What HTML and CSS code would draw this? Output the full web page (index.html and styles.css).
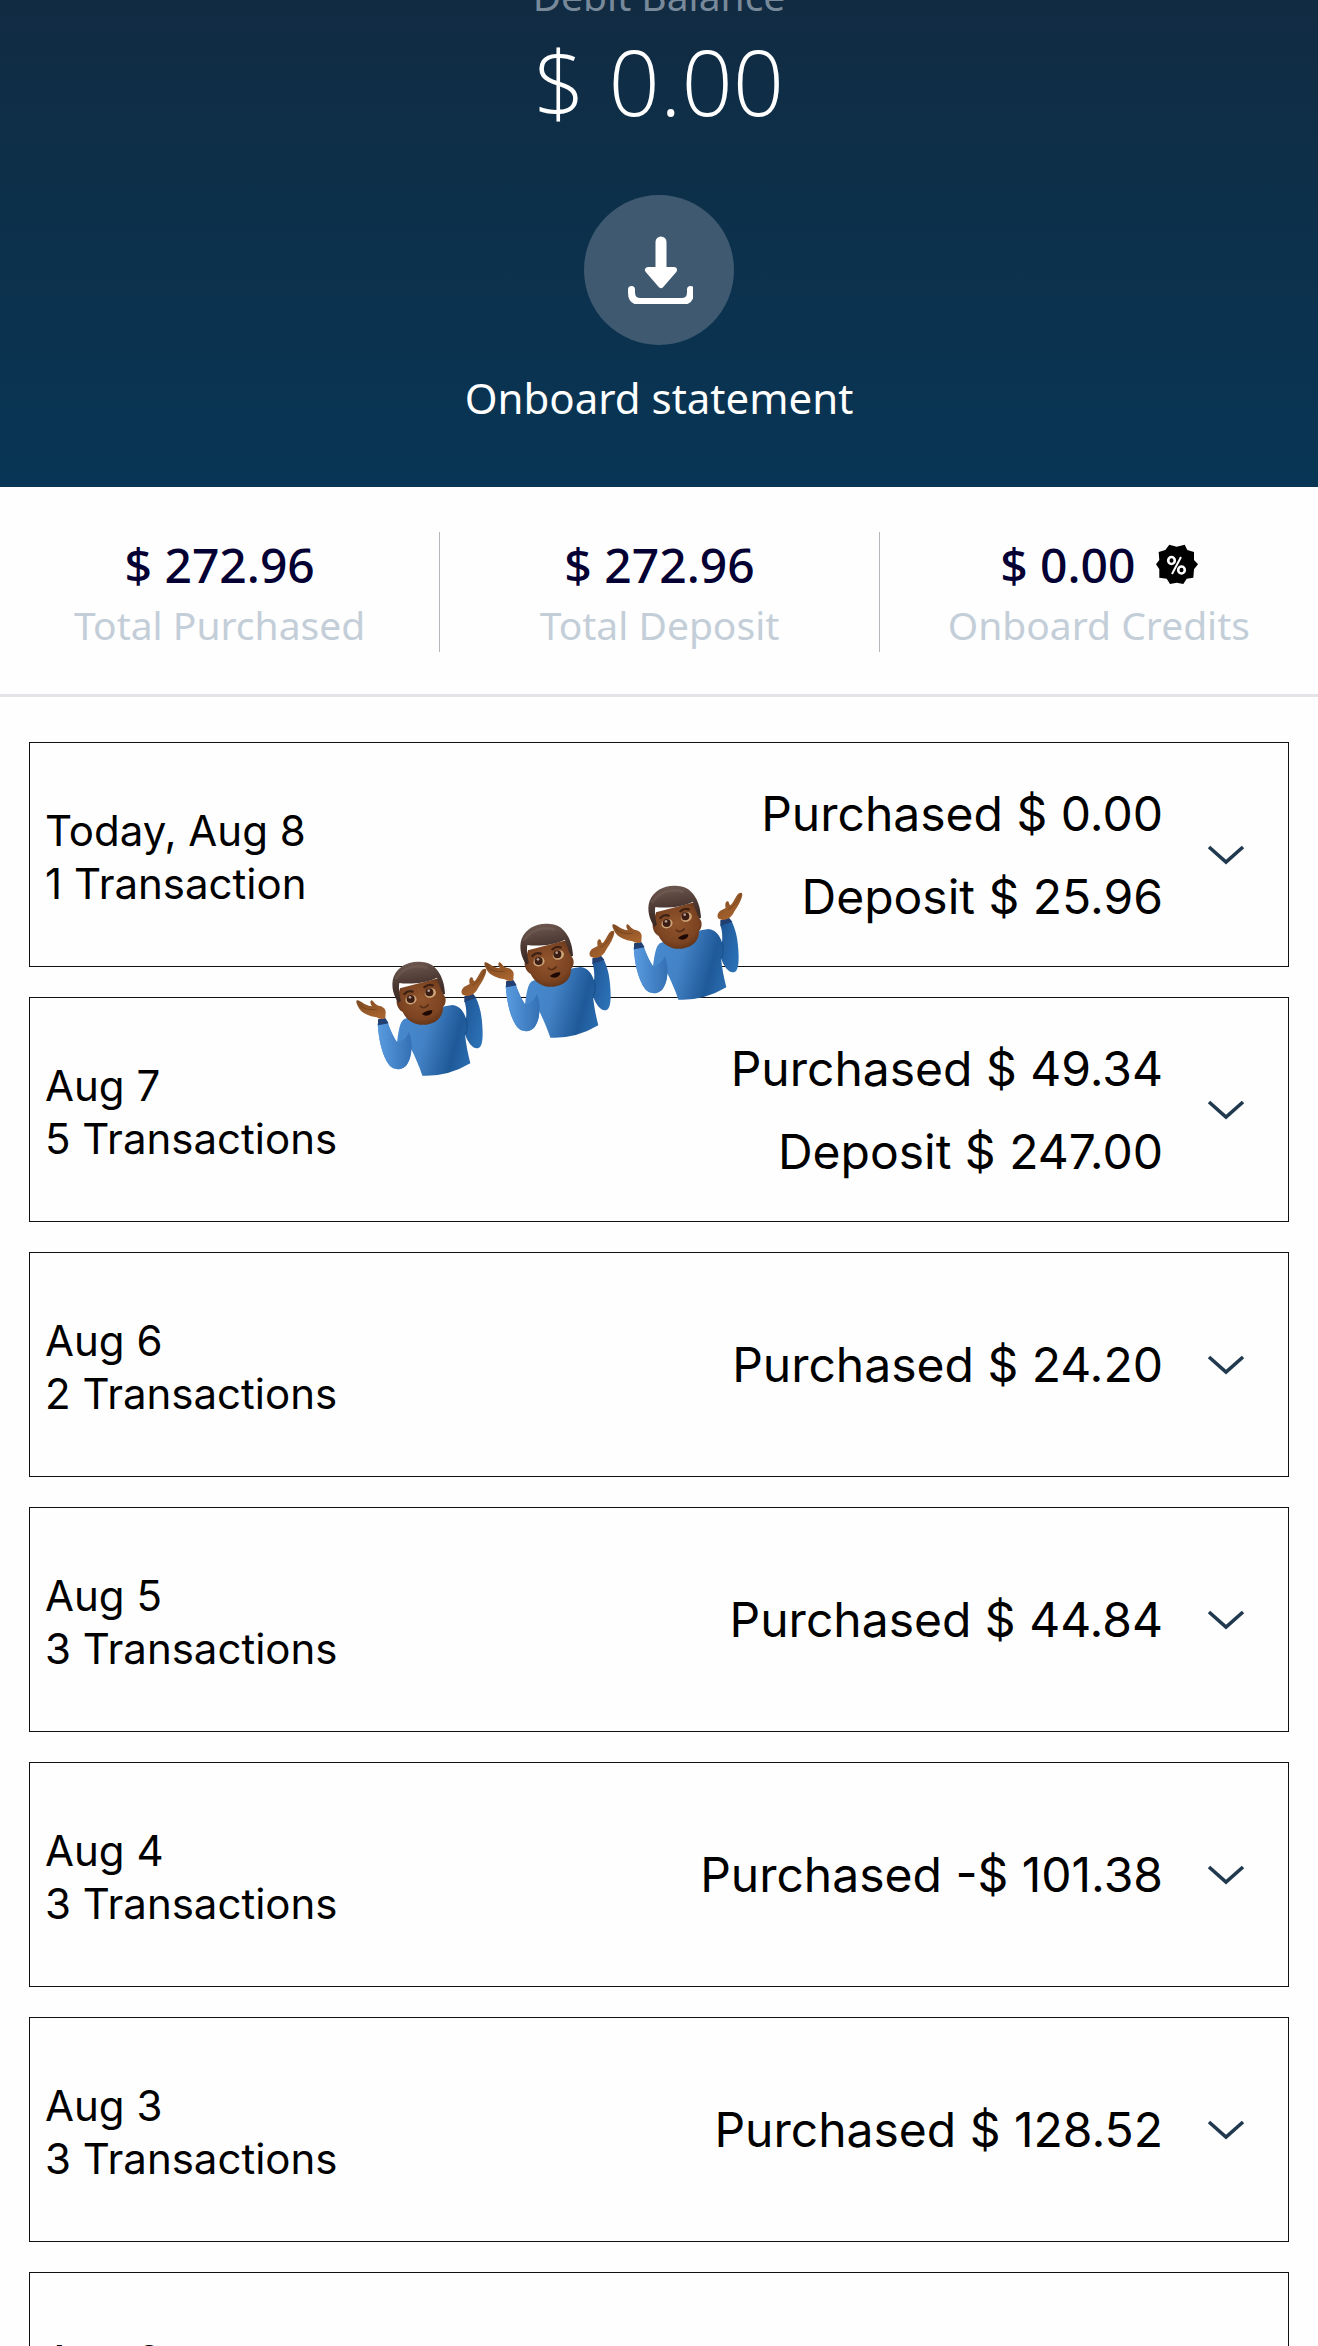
FILE: index.html
```html
<!DOCTYPE html>
<html lang="en">
<head>
<meta charset="utf-8">
<meta name="viewport" content="width=device-width, initial-scale=1">
<title>Onboard account</title>
<link rel="stylesheet" href="styles.css">
</head>
<body>
<svg class="defs" aria-hidden="true">
  <defs>
    <linearGradient id="shirt" x1="0" y1="0.400" x2="1" y2="0.600">
      <stop offset="0" stop-color="#4a8dd4"/><stop offset="0.450" stop-color="#4382c5"/><stop offset="0.750" stop-color="#1f5999"/><stop offset="1" stop-color="#2e74b9"/>
    </linearGradient>
    <linearGradient id="sleeve" x1="0" y1="0" x2="1" y2="0">
      <stop offset="0" stop-color="#5a9be0"/><stop offset="1" stop-color="#3470b3"/>
    </linearGradient>
    <radialGradient id="skin" cx="0.500" cy="0.450" r="0.600">
      <stop offset="0" stop-color="#92552d"/><stop offset="0.700" stop-color="#7c4422"/><stop offset="1" stop-color="#5d3117"/>
    </radialGradient>
    <linearGradient id="hair" x1="0.400" y1="0" x2="0.600" y2="1">
      <stop offset="0" stop-color="#6d5850"/><stop offset="0.500" stop-color="#4b3832"/><stop offset="1" stop-color="#35241f"/>
    </linearGradient>
    <linearGradient id="hand" x1="0" y1="0" x2="0.600" y2="1">
      <stop offset="0" stop-color="#7d4921"/><stop offset="1" stop-color="#a8642f"/>
    </linearGradient>
  </defs>
  <symbol id="chevron" viewBox="0 0 38 20">
    <path d="M2 2 L19 17 L36 2" fill="none" stroke="#20394f" stroke-width="3.600"/>
  </symbol>
  <symbol id="shrug" viewBox="0 0 440 390" overflow="visible">
    <path d="M83 206 C86 250 95 300 118 331 C133 347 158 346 170 330 C180 315 184 300 184 283 C196 308 208 335 217 362 Q292 366 361 325 C354 298 348 268 345 238 C354 264 370 285 386 279 C399 273 399 240 397 212 C395 176 388 150 377 127 L343 138 C349 155 350 176 348 190 C341 170 330 152 307 150 L285 154 L165 191 C152 196 147 215 141 262 C131 247 121 225 113 203 Z" fill="url(#shirt)"/>
    <path d="M83 206 C86 250 95 300 118 331 C133 347 158 346 170 330 C180 315 184 298 185 270 C184 252 180 240 177 230 C170 248 157 260 141 262 C131 247 121 225 113 203 Z" fill="url(#sleeve)"/>
    <path d="M348 190 C354 215 349 232 345 238" fill="none" stroke="#174a82" stroke-width="4" opacity="0.600"/>
    <path d="M84 193 L106 189 L116 205 L84 211 Z" fill="#213f72"/>
    <path d="M343 124 L369 116 L379 128 L343 141 Z" fill="#213f72"/>
    <path d="M80 187 C58 184 36 175 27 160 C22 150 16 139 21 136 C27 134 36 143 45 148 C53 152 60 153 66 154 C61 147 59 138 64 136 C70 136 74 149 85 152 C97 153 108 161 107 172 L106 189 Q92 196 80 187 Z" fill="url(#hand)"/>
    <path d="M28 148 C40 164 62 165 80 163" fill="none" stroke="#683916" stroke-width="3" opacity="0.600"/>
    <path d="M342 121 C331 116 333 103 343 95 L359 87 C357 77 358 68 364 67 C370 66 368 76 373 79 C383 72 389 50 399 43 C410 37 411 46 406 59 C399 78 388 91 382 103 C377 114 358 129 342 121 Z" fill="url(#hand)"/>
    <path d="M405 44 C398 66 382 83 367 91" fill="none" stroke="#683916" stroke-width="3" opacity="0.600"/>
    <path d="M142 130 C135 145 146 166 158 171 C170 197 196 213 228 209 C262 204 280 184 279 156 C290 146 289 124 280 119 L265 70 L150 100 Z" fill="url(#skin)"/>
    <path d="M145 143 C132 124 121 93 131 65 C145 31 181 16 216 21 C255 22 283 62 285 116 L280 119 C273 106 268 89 261 68 C227 86 176 88 148 84 C145 102 149 124 153 137 Z" fill="url(#hair)"/>
    <path d="M139 69 C160 40 195 27 229 38" fill="none" stroke="#8b7569" stroke-width="8" stroke-linecap="round" opacity="0.250"/>
    <path d="M163 117 Q174 105 188 110 M223 97 Q235 86 248 91" fill="none" stroke="#3c2115" stroke-width="7" stroke-linecap="round"/>
    <ellipse cx="183" cy="134" rx="17" ry="14" fill="#cfa578" transform="rotate(-18 183 134)"/>
    <ellipse cx="241" cy="114" rx="17" ry="14" fill="#cfa578" transform="rotate(-18 241 114)"/>
    <ellipse cx="182" cy="132" rx="12" ry="12" fill="#3b1d13"/>
    <ellipse cx="238" cy="112" rx="12" ry="12" fill="#3b1d13"/>
    <circle cx="180" cy="127" r="4" fill="#b59b8e"/>
    <circle cx="236" cy="107" r="4" fill="#b59b8e"/>
    <path d="M211 153 Q219 164 235 150" fill="none" stroke="#593016" stroke-width="5" stroke-linecap="round"/>
    <path d="M216 177 Q232 164 247 166 C247 181 227 187 216 177 Z" fill="#1d0804"/>
  </symbol>
</svg>
<main class="page">
  <header class="hero">
    <p class="hero-label">Debit Balance</p>
    <p class="hero-amount">$ 0.00</p>
    <button class="statement" type="button">
      <span class="statement-icon">
        <svg width="68" height="68" viewBox="0 0 68 68" aria-hidden="true">
          <path d="M36 6v32" stroke="#fff" stroke-width="11" stroke-linecap="round"/>
          <path d="M23 34h26L36 49z" fill="#fff" stroke="#fff" stroke-width="6" stroke-linejoin="round"/>
          <path d="M6.500 53.500v3q0 9 9 9h41q9 0 9-9v-3" fill="none" stroke="#fff" stroke-width="7" stroke-linecap="round"/>
        </svg>
      </span>
      <span>Onboard statement</span>
    </button>
  </header>

  <section class="totals">
    <div class="total"><strong>$ 272.96</strong><span>Total Purchased</span></div>
    <div class="total"><strong>$ 272.96</strong><span>Total Deposit</span></div>
    <div class="total">
      <strong>$ 0.00
        <svg width="42" height="42" viewBox="0 0 42 42" aria-hidden="true">
          <path d="M13.300 .7L20.700 2.700 28.700 .7 31.300 6 38 8v8l4 4.300-4 5-.7 8.400-6.600 1L27.300 40l-6.600-1.300L14 40l-3.300-5.300-7.400-1v-8.400L0 20.300 3.300 16 2.700 8l6.600-2z" fill="#000"/>
          <g fill="none" stroke="#fff" stroke-width="2.600"><ellipse cx="15.500" cy="16.500" rx="3.300" ry="3.500"/><ellipse cx="25.500" cy="26" rx="3.300" ry="3.500"/><path d="M25 13l-9 17" stroke-width="2"/></g>
        </svg>
      </strong>
      <span>Onboard Credits</span>
    </div>
  </section>

  <section class="days">
    <button class="day" type="button"><span class="when">Today, Aug 8<br>1 Transaction</span><span class="sums">Purchased $ 0.00<br>Deposit $ 25.96</span><svg class="chev"><use href="#chevron"/></svg></button>
    <button class="day" type="button"><span class="when">Aug 7<br>5 Transactions</span><span class="sums">Purchased $ 49.34<br>Deposit $ 247.00</span><svg class="chev"><use href="#chevron"/></svg></button>
    <button class="day" type="button"><span class="when">Aug 6<br>2 Transactions</span><span class="sums">Purchased $ 24.20</span><svg class="chev"><use href="#chevron"/></svg></button>
    <button class="day" type="button"><span class="when">Aug 5<br>3 Transactions</span><span class="sums">Purchased $ 44.84</span><svg class="chev"><use href="#chevron"/></svg></button>
    <button class="day" type="button"><span class="when">Aug 4<br>3 Transactions</span><span class="sums">Purchased -$ 101.38</span><svg class="chev"><use href="#chevron"/></svg></button>
    <button class="day" type="button"><span class="when">Aug 3<br>3 Transactions</span><span class="sums">Purchased $ 128.52</span><svg class="chev"><use href="#chevron"/></svg></button>
    <button class="day" type="button"><span class="when">Aug 2<br>&nbsp;</span></button>
    <svg class="shrugs" viewBox="0 -228 1188 618" role="img" aria-label="Three shrugging people">
      <use href="#shrug" x="0" y="0" width="440" height="390"/>
      <use href="#shrug" x="384" y="-114" width="440" height="390"/>
      <use href="#shrug" x="768" y="-228" width="440" height="390"/>
    </svg>
  </section>
</main>
</body>
</html>
```

FILE: styles.css
```css
* { box-sizing: border-box; }
body { margin: 0; background: #fefefe; color: #000; font-family: "Noto Sans", sans-serif; }
p { margin: 0; }
button { font: inherit; color: inherit; background: none; border: 0; padding: 0; border-radius: 0; }
.defs { position: absolute; width: 0; height: 0; }
.page { height: 100vh; overflow: hidden; }
.hero {
  display: flex; flex-direction: column; align-items: center;
  padding-bottom: 60px;
  background: linear-gradient(#112b42, #0d304a 40%, #083555);
  color: #fff;
}
.hero-label { margin-top: -32px; font-size: 39px; line-height: 56px; color: #78899a; }
.hero-amount { font-family: "Open Sans", sans-serif; font-weight: 300; font-size: 90px; line-height: 114px; }
.statement { display: flex; flex-direction: column; align-items: center; gap: 24px; margin-top: 57px; font-size: 42px; line-height: 58px; }
.statement-icon { display: flex; align-items: center; justify-content: center; width: 150px; height: 150px; border-radius: 50%; background: #3f5a70; }
.totals { display: grid; grid-template-columns: repeat(3, 1fr); padding: 45px 0 42px; border-bottom: 3px solid #e3e4e8; }
.total { display: flex; flex-direction: column; align-items: center; gap: 4px; height: 120px; padding-top: 5px; font-size: 39px; line-height: 56px; color: #c3ced8; }
.total + .total { border-left: 1px solid #b4b8bc; }
.total strong { display: flex; align-items: center; gap: 20px; font-size: 48px; line-height: 56px; font-weight: 500; color: #040033; }
.days { position: relative; display: flex; flex-direction: column; gap: 30px; padding: 45px 29px; font-family: Inter, sans-serif; }
.day { display: flex; align-items: center; min-height: 225px; padding: 0 43px 0 15px; border: 1px solid #111; text-align: left; }
.when { flex: 1; font-size: 42px; line-height: 53px; padding-top: 5px; }
.sums { font-size: 48px; line-height: 83px; text-align: right; margin-right: 44px; }
.chev { width: 38px; height: 20px; }
/* sticker laid over the first two day cards */
.shrugs { position: absolute; left: 350px; top: 182px; width: 396px; height: 206px; overflow: visible; pointer-events: none; }
```
